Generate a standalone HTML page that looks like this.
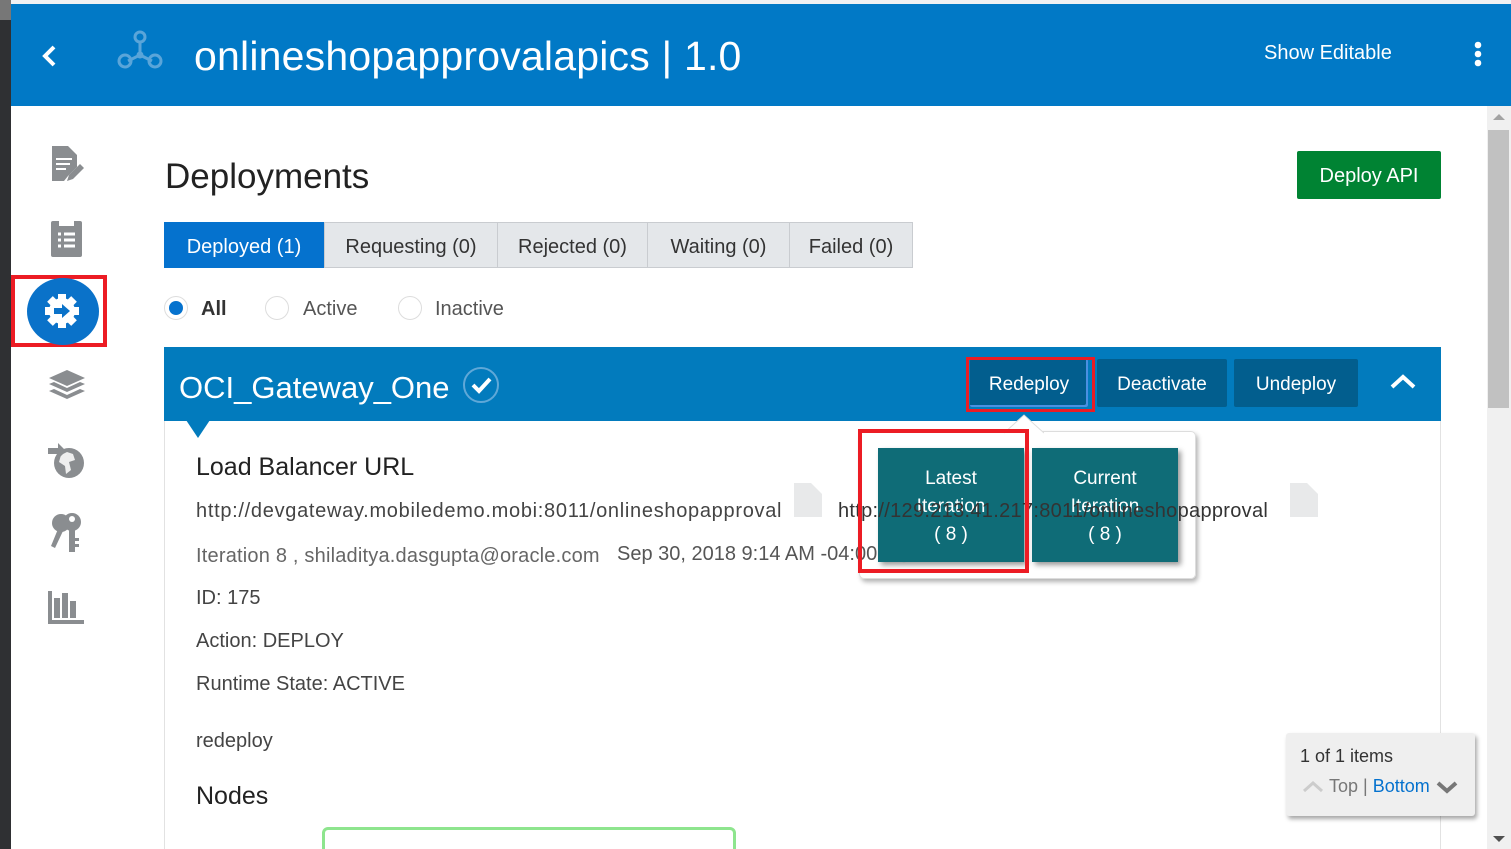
<!DOCTYPE html>
<html style="overflow:hidden;height:849px"><head><meta charset="utf-8"><style>
*{box-sizing:border-box;margin:0;padding:0}
body{width:1511px;height:849px;overflow:hidden;position:relative;background:#fff;font-family:"Liberation Sans",sans-serif;color:#333}
.a{position:absolute;white-space:nowrap}
.tab{position:absolute;top:222px;height:46px;background:#e4e7ea;border:1px solid #c9ccd0;font-size:20px;line-height:44px;text-align:center;color:#333}
.btn{position:absolute;top:359px;height:48px;background:#025e8e;color:#fff;font-size:19px;line-height:48px;text-align:center;border-radius:2px}
.tl{position:absolute;top:448px;width:146px;height:114px;background:#0f6c77;color:#fff;font-size:19px;text-align:center;line-height:28px;padding-top:17px;box-shadow:3px 3px 5px rgba(0,0,0,.4)}
.gi{fill:#8a8d90}
</style></head><body>
<div class="a" style="left:0;top:0;width:11px;height:849px;background:#2f3033"></div>
<div class="a" style="left:0;top:0;width:11px;height:20px;background:#777"></div>
<div class="a" style="left:11px;top:0;width:1500px;height:4px;background:#f0f1f3"></div>
<div class="a" style="left:11px;top:4px;width:1500px;height:102px;background:#0179c6"></div>
<svg class="a" style="left:38px;top:42px" width="24" height="28"><path d="M16 5 L7 14 L16 23" stroke="#fff" stroke-width="4" fill="none"/></svg>
<svg class="a" style="left:116px;top:28px" width="50" height="44" fill="none" stroke="#5aa5d9" stroke-width="3"><circle cx="24" cy="9" r="5"/><circle cx="9" cy="33" r="6"/><circle cx="39" cy="33" r="6"/><path d="M24 14 V27 L12 33 M24 27 L36 33"/><circle cx="24" cy="27" r="2" fill="#5aa5d9"/></svg>
<div class="a" style="left:194px;top:33px;font-size:41px;color:#fff;letter-spacing:0.2px">onlineshopapprovalapics | 1.0</div>
<div class="a" style="left:1264px;top:42px;font-size:20px;color:#fff">Show Editable</div>
<svg class="a" style="left:1472px;top:40px" width="12" height="28" fill="#fff"><circle cx="6" cy="5" r="3.3"/><circle cx="6" cy="14" r="3.3"/><circle cx="6" cy="23" r="3.3"/></svg>
<div class="a" style="left:1487px;top:106px;width:24px;height:743px;background:#f0f0f0"></div>
<div class="a" style="left:1488px;top:130px;width:21px;height:278px;background:#c1c1c1"></div>
<svg class="a" style="left:1492px;top:112px" width="14" height="10"><path d="M1 8 L7 2 L13 8Z" fill="#a3a3a3"/></svg>
<svg class="a" style="left:1492px;top:834px" width="14" height="10"><path d="M1 2 L7 8 L13 2Z" fill="#505050"/></svg>
<svg class="a" style="left:50px;top:145px" width="36" height="38"><path class="gi" d="M2 1 H18 L27 10 V22 L18 31 L14 36 H2Z"/><path d="M6 14 H22 M6 19 H20 M6 24 H16" stroke="#fff" stroke-width="2"/><path class="gi" d="M19 30 L30 19 L34 23 L23 34 L17 36Z"/></svg>
<svg class="a" style="left:50px;top:220px" width="34" height="38"><rect class="gi" x="1" y="1" width="31" height="36" rx="2"/><rect x="9" y="1" width="15" height="5" fill="#fff"/><path d="M8 14 H11 M14 14 H25 M8 20 H11 M14 20 H25 M8 26 H11 M14 26 H25" stroke="#fff" stroke-width="3"/></svg>
<div class="a" style="left:11px;top:275px;width:96px;height:72px;border:4px solid #ec1c24"></div>
<div class="a" style="left:27px;top:278px;width:72px;height:67px;border-radius:50%;background:#0a72c9"></div>
<svg class="a" style="left:42px;top:291px" width="40" height="40" viewBox="0 0 40 40"><g fill="#fff"><circle cx="20" cy="20" r="13"/><g id="t"><rect x="16" y="3" width="8" height="8"/><rect x="16" y="29" width="8" height="8"/><rect x="3" y="16" width="8" height="8"/><rect x="29" y="16" width="8" height="8"/></g><use href="#t" transform="rotate(45 20 20)"/></g><path d="M12 17 H20 V13 L28 20 L20 27 V23 H12Z" fill="#0a72c9"/></svg>
<svg class="a" style="left:47px;top:369px" width="40" height="34"><path class="gi" d="M20 1 L38 9 L20 17 L2 9Z M2 15 L7 13 L20 19 L33 13 L38 15 L20 23Z M2 22 L7 20 L20 26 L33 20 L38 22 L20 30Z"/></svg>
<svg class="a" style="left:47px;top:442px" width="40" height="40"><circle class="gi" cx="22" cy="21" r="15"/><path d="M20 10 L26 12 L28 18 L22 20 L24 28 L19 32 L18 24 L12 20 L14 13Z" fill="#fff" opacity=".85"/><path class="gi" d="M1 6 H11 V1 L19 9 L11 17 V12 H1Z"/></svg>
<svg class="a" style="left:51px;top:513px" width="32" height="40"><circle class="gi" cx="10" cy="10" r="9"/><path class="gi" d="M7 16 L0 33 L4 35 L12 18Z"/><circle class="gi" cx="21" cy="9" r="9"/><circle cx="21" cy="6" r="3" fill="#fff"/><rect class="gi" x="18" y="14" width="6" height="25"/><rect class="gi" x="24" y="25" width="4" height="3"/><rect class="gi" x="24" y="31" width="4" height="3"/></svg>
<svg class="a" style="left:47px;top:590px" width="38" height="36"><path class="gi" d="M1 1 H5 V30 H37 V34 H1Z"/><rect class="gi" x="7" y="8" width="6" height="20"/><rect class="gi" x="15" y="3" width="6" height="25"/><rect class="gi" x="23" y="11" width="6" height="17"/></svg>
<div class="a" style="left:165px;top:157px;font-size:35px;color:#222">Deployments</div>
<div class="a" style="left:1297px;top:151px;width:144px;height:48px;background:#008333;border-radius:2px;color:#fff;font-size:20px;line-height:50px;text-align:center">Deploy API</div>
<div class="tab" style="left:164px;width:160px;background:#0572ce;border-color:#0572ce;color:#fff;line-height:48px">Deployed (1)</div>
<div class="tab" style="left:324px;width:174px;line-height:48px">Requesting (0)</div>
<div class="tab" style="left:497px;width:151px;line-height:48px">Rejected (0)</div>
<div class="tab" style="left:647px;width:143px;line-height:48px">Waiting (0)</div>
<div class="tab" style="left:789px;width:124px;line-height:48px">Failed (0)</div>
<div class="a" style="left:164px;top:296px;width:24px;height:24px;border-radius:50%;border:1px solid #ddd"></div>
<div class="a" style="left:169px;top:301px;width:14px;height:14px;border-radius:50%;background:#0572ce"></div>
<div class="a" style="left:201px;top:298px;font-size:20px;font-weight:bold;color:#333">All</div>
<div class="a" style="left:265px;top:296px;width:24px;height:24px;border-radius:50%;border:1px solid #ddd"></div>
<div class="a" style="left:303px;top:298px;font-size:20px;color:#555">Active</div>
<div class="a" style="left:398px;top:296px;width:24px;height:24px;border-radius:50%;border:1px solid #ddd"></div>
<div class="a" style="left:435px;top:298px;font-size:20px;color:#555">Inactive</div>
<div class="a" style="left:164px;top:421px;width:1277px;height:460px;border:1px solid #e2e2e2;border-top:none"></div>
<div class="a" style="left:164px;top:347px;width:1277px;height:74px;background:#027bbd"></div>
<svg class="a" style="left:186px;top:420px" width="24" height="20"><path d="M0 0 H24 L12 18Z" fill="#027bbd"/></svg>
<div class="a" style="left:179px;top:370px;font-size:31px;color:#fff">OCI_Gateway_One</div>
<svg class="a" style="left:462px;top:366px" width="38" height="38"><circle cx="19" cy="19" r="17" fill="none" stroke="#5fa8d8" stroke-width="2"/><path d="M11 19 L17 25 L28 13" stroke="#fff" stroke-width="4" fill="none"/></svg>
<div class="btn" style="left:970px;width:118px;box-shadow:inset -2px -2px 0 #4a90e2;line-height:52px">Redeploy</div>
<div class="a" style="left:966px;top:357px;width:129px;height:55px;border:3px solid #ec1c24"></div>
<div class="btn" style="left:1097px;width:130px;line-height:52px">Deactivate</div>
<div class="btn" style="left:1234px;width:124px;line-height:52px">Undeploy</div>
<svg class="a" style="left:1389px;top:372px" width="28" height="20"><path d="M3 15 L14 5 L25 15" stroke="#fff" stroke-width="4" fill="none"/></svg>
<div class="a" style="left:196px;top:453px;font-size:25px;color:#222">Load Balancer URL</div>
<div class="a" style="left:196px;top:500px;font-size:20px;color:#444;letter-spacing:0.7px">http://devgateway.mobiledemo.mobi:8011/onlineshopapproval</div>
<svg class="a" style="left:793px;top:482px" width="30" height="36"><path d="M1 1 H18 L29 12 V35 H1Z" fill="#e8e9ea"/></svg>
<svg class="a" style="left:1289px;top:482px" width="30" height="36"><path d="M1 1 H18 L29 12 V35 H1Z" fill="#e8e9ea"/></svg>
<div class="a" style="left:196px;top:545px;font-size:20px;color:#666;letter-spacing:0.2px">Iteration 8 , shiladitya.dasgupta@oracle.com</div>
<svg class="a" style="left:890px;top:536px" width="28" height="28"><circle cx="14" cy="14" r="11" fill="none" stroke="#999" stroke-width="2.5"/><path d="M14 7 V14 H20" stroke="#999" stroke-width="2.5" fill="none"/></svg>
<div class="a" style="left:196px;top:587px;font-size:20px;color:#444">ID: 175</div>
<div class="a" style="left:196px;top:630px;font-size:20px;color:#444">Action: DEPLOY</div>
<div class="a" style="left:196px;top:673px;font-size:20px;color:#444">Runtime State: ACTIVE</div>
<div class="a" style="left:196px;top:730px;font-size:20px;color:#444">redeploy</div>
<div class="a" style="left:196px;top:782px;font-size:25px;color:#222">Nodes</div>
<div class="a" style="left:322px;top:827px;width:414px;height:40px;border:3px solid #8ee58e;border-radius:6px"></div>
<div class="a" style="left:859px;top:431px;width:337px;height:148px;background:rgba(255,255,255,.6);border:1px solid #ddd;border-radius:5px;box-shadow:2px 3px 5px rgba(0,0,0,.3)"></div>
<svg class="a" style="left:1004px;top:414px" width="40" height="20"><path d="M0 19 L20 1 L40 19" fill="#fff" stroke="#ddd"/></svg>
<div class="tl" style="left:878px">Latest<br>Iteration<br>( 8 )</div>
<div class="tl" style="left:1032px">Current<br>Iteration<br>( 8 )</div>
<div class="a" style="left:617px;top:543px;font-size:20px;color:#555">Sep 30, 2018 9:14 AM -04:00</div>
<div class="a" style="left:838px;top:500px;font-size:20px;color:#333;letter-spacing:0.3px">http://129.213.41.217:8011/onlineshopapproval</div>
<div class="a" style="left:858px;top:429px;width:171px;height:144px;border:4px solid #ec1c24"></div>
<div class="a" style="left:1286px;top:733px;width:189px;height:83px;background:#efefef;border-radius:3px;box-shadow:2px 3px 4px rgba(0,0,0,.35)"></div>
<div class="a" style="left:1300px;top:746px;font-size:18px;color:#333">1 of 1 items</div>
<svg class="a" style="left:1302px;top:780px" width="22" height="14"><path d="M2 11 L11 3 L20 11" stroke="#ccc" stroke-width="3" fill="none"/></svg>
<div class="a" style="left:1329px;top:776px;font-size:18px;color:#777">Top | <span style="color:#0572ce">Bottom</span></div>
<svg class="a" style="left:1436px;top:780px" width="22" height="14"><path d="M2 3 L11 11 L20 3" stroke="#777" stroke-width="4" fill="none"/></svg>
</body></html>
